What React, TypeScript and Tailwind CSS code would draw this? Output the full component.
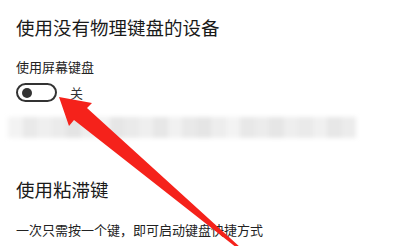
import React from 'react';

const blurCells = [
  '#f3f3f3', '#e9e9e9', '#efefef', '#ebebeb', '#e4e4e4', '#eeeeee', '#f2f2f2', '#e6e6e6',
  '#eaeaea', '#efefef', '#e7e7e7', '#f1f1f1', '#e9e9e9', '#e5e5e5', '#ededed', '#f3f3f3',
  '#e8e8e8', '#ececec', '#e6e6e6', '#eeeeee', '#eaeaea', '#f0f0f0', '#e7e7e7', '#ececec',
];

const App: React.FC = () => {
  return (
    <div
      className="relative w-[414px] h-[246px] overflow-hidden bg-white text-[#111]"
      style={{ fontFamily: '"Noto Sans CJK SC", "Noto Sans", sans-serif' }}
    >
      <div className="flex flex-col pl-4 pt-[14px]">
        <h1 className="text-[18.5px] leading-[26px] font-normal text-[#1a1a1a]">使用没有物理键盘的设备</h1>

        <p className="mt-[18px] text-[13px] leading-[18px] text-[#222]">使用屏幕键盘</p>

        <div className="mt-[7px] flex items-center gap-[13px]">
          <div className="w-[41px] h-[19px] rounded-full border-2 border-[#333] flex items-center pl-[4px]">
            <div className="w-[10px] h-[10px] rounded-full bg-[#333]" />
          </div>
          <span className="text-[13px] leading-[18px] text-[#333]">关</span>
        </div>

        <div className="mt-[15px] -ml-2 w-[348px] h-[21px] flex overflow-hidden blur-[2px]">
          {blurCells.map((c, i) => (
            <div key={i} className="flex-1 h-full" style={{ backgroundColor: c }} />
          ))}
        </div>

        <h2 className="mt-[38px] text-[18.5px] leading-[26px] font-normal text-[#1a1a1a]">使用粘滞键</h2>

        <p className="mt-[19px] text-[13px] leading-[18px] text-[#222]">
          一次只需按一个键，即可启动键盘快捷方式
        </p>
      </div>

      <svg className="absolute inset-0 pointer-events-none" width="414" height="246" viewBox="0 0 414 246">
        <polygon
          points="59,97 92,103 87,108 241,248 237,248 74,120 69,126"
          fill="#f5221b"
        />
      </svg>
    </div>
  );
};

export default App;
